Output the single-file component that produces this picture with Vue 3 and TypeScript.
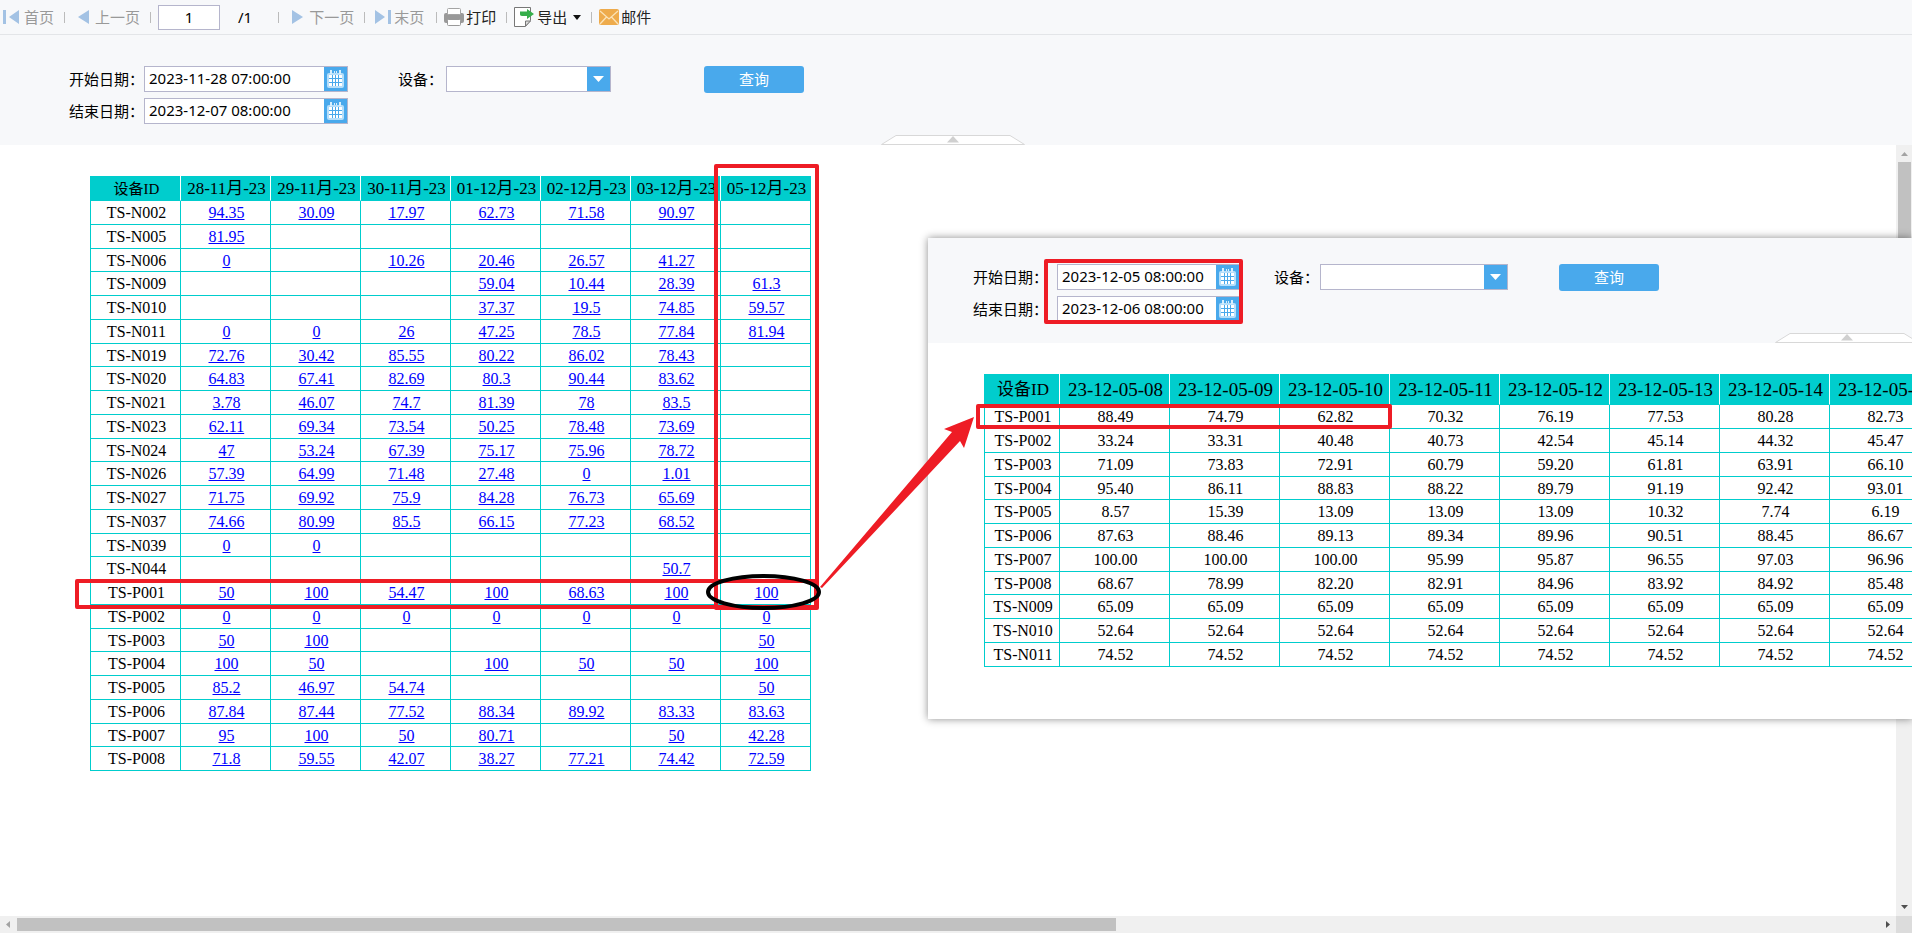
<script setup lang="ts">
import { ref } from 'vue'

interface Row {
  id: string
  values: string[]
}

const parse = (lines: string[]): Row[] =>
  lines.map((line) => {
    const [id, ...values] = line.split(',')
    return { id, values }
  })

const dayColumns = ['28-11月-23', '29-11月-23', '30-11月-23', '01-12月-23', '02-12月-23', '03-12月-23', '05-12月-23']
const dayRows = parse([
  'TS-N002,94.35,30.09,17.97,62.73,71.58,90.97,',
  'TS-N005,81.95,,,,,,',
  'TS-N006,0,,10.26,20.46,26.57,41.27,',
  'TS-N009,,,,59.04,10.44,28.39,61.3',
  'TS-N010,,,,37.37,19.5,74.85,59.57',
  'TS-N011,0,0,26,47.25,78.5,77.84,81.94',
  'TS-N019,72.76,30.42,85.55,80.22,86.02,78.43,',
  'TS-N020,64.83,67.41,82.69,80.3,90.44,83.62,',
  'TS-N021,3.78,46.07,74.7,81.39,78,83.5,',
  'TS-N023,62.11,69.34,73.54,50.25,78.48,73.69,',
  'TS-N024,47,53.24,67.39,75.17,75.96,78.72,',
  'TS-N026,57.39,64.99,71.48,27.48,0,1.01,',
  'TS-N027,71.75,69.92,75.9,84.28,76.73,65.69,',
  'TS-N037,74.66,80.99,85.5,66.15,77.23,68.52,',
  'TS-N039,0,0,,,,,',
  'TS-N044,,,,,,50.7,',
  'TS-P001,50,100,54.47,100,68.63,100,100',
  'TS-P002,0,0,0,0,0,0,0',
  'TS-P003,50,100,,,,,50',
  'TS-P004,100,50,,100,50,50,100',
  'TS-P005,85.2,46.97,54.74,,,,50',
  'TS-P006,87.84,87.44,77.52,88.34,89.92,83.33,83.63',
  'TS-P007,95,100,50,80.71,,50,42.28',
  'TS-P008,71.8,59.55,42.07,38.27,77.21,74.42,72.59',
])

const hourColumns = ['08', '09', '10', '11', '12', '13', '14', '15'].map((h) => `23-12-05-${h}`)
const hourRows = parse([
  'TS-P001,88.49,74.79,62.82,70.32,76.19,77.53,80.28,82.73',
  'TS-P002,33.24,33.31,40.48,40.73,42.54,45.14,44.32,45.47',
  'TS-P003,71.09,73.83,72.91,60.79,59.20,61.81,63.91,66.10',
  'TS-P004,95.40,86.11,88.83,88.22,89.79,91.19,92.42,93.01',
  'TS-P005,8.57,15.39,13.09,13.09,13.09,10.32,7.74,6.19',
  'TS-P006,87.63,88.46,89.13,89.34,89.96,90.51,88.45,86.67',
  'TS-P007,100.00,100.00,100.00,95.99,95.87,96.55,97.03,96.96',
  'TS-P008,68.67,78.99,82.20,82.91,84.96,83.92,84.92,85.48',
  'TS-N009,65.09,65.09,65.09,65.09,65.09,65.09,65.09,65.09',
  'TS-N010,52.64,52.64,52.64,52.64,52.64,52.64,52.64,52.64',
  'TS-N011,74.52,74.52,74.52,74.52,74.52,74.52,74.52,74.52',
])

const page = ref('1')
const filters = ref([
  { key: 'main', start: '2023-11-28 07:00:00', end: '2023-12-07 08:00:00', device: '' },
  { key: 'detail', start: '2023-12-05 08:00:00', end: '2023-12-06 08:00:00', device: '' },
])
const dateFields = [
  { key: 'start', label: '开始日期：' },
  { key: 'end', label: '结束日期：' },
] as const
</script>

<template>
  <div class="report">
    <nav class="toolbar">
      <button class="tool nav" type="button" disabled>
        <svg width="16" height="16" viewBox="0 0 16 16"><path d="M0 1h3v14H0zM16 1v14L6 8z" /></svg>首页
      </button>
      <i class="sep"></i>
      <button class="tool nav" type="button" disabled>
        <svg width="11" height="16" viewBox="0 0 11 16"><path d="M11 1v14L0 8z" /></svg>上一页
      </button>
      <i class="sep tight"></i>
      <input v-model="page" class="page" aria-label="页码" />
      <span class="total">/1</span>
      <i class="sep"></i>
      <button class="tool nav" type="button" disabled>
        <svg width="11" height="16" viewBox="0 0 11 16"><path d="M0 1v14l11-7z" /></svg>下一页
      </button>
      <i class="sep mid"></i>
      <button class="tool nav last" type="button" disabled>
        <svg width="16" height="16" viewBox="0 0 16 16"><path d="M0 1v14l10-7zM13 1h3v14h-3z" /></svg>末页
      </button>
      <i class="sep tight"></i>
      <button class="tool" type="button">
        <svg width="20" height="20" viewBox="0 0 20 20">
          <rect x="0" y="6" width="20" height="10" rx="2" fill="#999" />
          <rect x="3.500" y="1.500" width="13" height="6" rx="1" fill="#fff" stroke="#a4a4a4" />
          <rect x="3.500" y="12.500" width="13" height="6" rx="1" fill="#fff" stroke="#999" />
        </svg>打印
      </button>
      <i class="sep tight"></i>
      <button class="tool" type="button">
        <svg width="21" height="20" viewBox="0 0 21 20">
          <path d="M.5.5h16v13l-5 6H.5z" fill="#fff" stroke="#777" />
          <path d="M11.500 19v-5h5z" fill="#ddd" stroke="#777" />
          <path d="M6 4.500h7V2l7 5-7 5V9H8c-1.500 0-2-1-2-2z" fill="#35ae4a" />
        </svg>导出
        <svg class="caret" width="8" height="5" viewBox="0 0 8 5"><path d="M0 0h8L4 5z" fill="#111" /></svg>
      </button>
      <i class="sep tight"></i>
      <button class="tool" type="button">
        <svg width="20" height="16" viewBox="0 0 20 16">
          <rect width="20" height="16" rx="2" fill="#eeab4c" />
          <path d="M1 2l9 8 9-8M1 15l6.500-7M19 15l-6.500-7" fill="none" stroke="#fbe3b8" stroke-width="1.300" />
        </svg>邮件
      </button>
    </nav>

    <form
      v-for="f in filters.slice(0, 1)" :key="f.key" class="filter" @submit.prevent>
      <div class="dates">
        <div v-for="d in dateFields" :key="d.key" class="row">
          <label :for="`${f.key}-${d.key}`">{{ d.label }}</label>
          <div class="field">
            <input :id="`${f.key}-${d.key}`" v-model="f[d.key]" />
            <button class="pick" type="button" aria-label="选择日期">
              <svg width="17" height="18" viewBox="0 0 17 18">
                <rect x="0" y="3" width="17" height="15" rx="2" fill="#b5defa" />
                <path d="M3 0h2v4H3zM7 1h1v2H7zM9 1h1v2H9zM12 0h2v4h-2z" fill="#d9effc" />
                <path d="M2 5h13v11H2z" fill="#49a9ec" />
                <path d="M2 5h3v3H2zM6 5h2v3H6zM9 5h2v3H9zM12 5h3v3h-3zM2 9h3v3H2zM6 9h2v3H6zM9 9h2v3H9zM12 9h3v3h-3zM2 13h3v3H2zM6 13h2v3H6zM9 13h2v3H9zM12 13h3v3h-3z" fill="#fff" />
              </svg>
            </button>
          </div>
        </div>
      </div>
      <div class="row device">
        <label :for="`${f.key}-device`">设备：</label>
        <div class="field">
          <select :id="`${f.key}-device`" v-model="f.device"><option value=""></option></select>
          <span class="pick drop"><svg width="11" height="6" viewBox="0 0 11 6"><path d="M0 0h11L5.500 6z" fill="#fff" /></svg></span>
        </div>
      </div>
      <button class="query" type="submit">查询</button>
      <button class="fold" type="button" aria-label="收起">
        <svg width="144" height="10" viewBox="0 0 144 10">
          <path d="M.5 9.500L15 .5h114l14.500 9z" fill="#fff" stroke="#d8d8d8" />
          <path d="M66 7.500h12L72 1z" fill="#d0d0d0" />
        </svg>
      </button>
    </form>

    <main class="viewport">
      <div class="sheet">
        <table class="grid days">
          <thead>
            <tr>
              <th class="id">设备ID</th>
              <th v-for="c in dayColumns" :key="c">{{ c }}</th>
            </tr>
          </thead>
          <tbody>
            <tr v-for="r in dayRows" :key="r.id">
              <td>{{ r.id }}</td>
              <td v-for="(v, i) in r.values" :key="i"><a v-if="v" href="#">{{ v }}</a></td>
            </tr>
          </tbody>
        </table>
      </div>
      <div class="vbar">
        <svg width="7" height="4" viewBox="0 0 7 4"><path d="M0 4h7L3.500 0z" fill="#a3a3a3" /></svg>
        <i class="thumb"></i>
        <svg width="7" height="4" viewBox="0 0 7 4"><path d="M0 0h7L3.500 4z" fill="#505050" /></svg>
      </div>
    </main>
    <div class="hbar">
      <div class="track">
        <svg width="4" height="7" viewBox="0 0 4 7"><path d="M4 0v7L0 3.500z" fill="#a3a3a3" /></svg>
        <div class="run"><i class="thumb"></i></div>
        <svg width="4" height="7" viewBox="0 0 4 7"><path d="M0 0v7l4-3.500z" fill="#505050" /></svg>
      </div>
      <i class="corner"></i>
    </div>

    <section class="detail">
      <form v-for="f in filters.slice(1)" :key="f.key" class="filter" @submit.prevent>
        <div class="dates">
          <div v-for="d in dateFields" :key="d.key" class="row">
            <label :for="`${f.key}-${d.key}`">{{ d.label }}</label>
            <div class="field">
              <input :id="`${f.key}-${d.key}`" v-model="f[d.key]" />
              <button class="pick" type="button" aria-label="选择日期">
                <svg width="17" height="18" viewBox="0 0 17 18">
                  <rect x="0" y="3" width="17" height="15" rx="2" fill="#b5defa" />
                  <path d="M3 0h2v4H3zM7 1h1v2H7zM9 1h1v2H9zM12 0h2v4h-2z" fill="#d9effc" />
                  <path d="M2 5h13v11H2z" fill="#49a9ec" />
                  <path d="M2 5h3v3H2zM6 5h2v3H6zM9 5h2v3H9zM12 5h3v3h-3zM2 9h3v3H2zM6 9h2v3H6zM9 9h2v3H9zM12 9h3v3h-3zM2 13h3v3H2zM6 13h2v3H6zM9 13h2v3H9zM12 13h3v3h-3z" fill="#fff" />
                </svg>
              </button>
            </div>
          </div>
        </div>
        <div class="row device">
          <label :for="`${f.key}-device`">设备：</label>
          <div class="field">
            <select :id="`${f.key}-device`" v-model="f.device"><option value=""></option></select>
            <span class="pick drop"><svg width="11" height="6" viewBox="0 0 11 6"><path d="M0 0h11L5.500 6z" fill="#fff" /></svg></span>
          </div>
        </div>
        <button class="query" type="submit">查询</button>
        <button class="fold" type="button" aria-label="收起">
          <svg width="144" height="10" viewBox="0 0 144 10">
            <path d="M.5 9.500L15 .5h114l14.500 9z" fill="#fff" stroke="#d8d8d8" />
            <path d="M66 7.500h12L72 1z" fill="#d0d0d0" />
          </svg>
        </button>
      </form>
      <div class="inner">
        <table class="grid hours">
          <thead>
            <tr>
              <th class="id">设备ID</th>
              <th v-for="c in hourColumns" :key="c">{{ c }}</th>
            </tr>
          </thead>
          <tbody>
            <tr v-for="r in hourRows" :key="r.id">
              <td>{{ r.id }}</td>
              <td v-for="(v, i) in r.values" :key="i">{{ v }}</td>
            </tr>
          </tbody>
        </table>
      </div>
    </section>

    <svg class="marks" width="1400" height="620" viewBox="0 0 1400 620">
      <g fill="none" stroke="#ee1c25" stroke-width="4" stroke-linejoin="round">
        <rect x="716" y="166" width="101" height="442" />
        <rect x="77" y="581" width="739" height="26" />
        <rect x="1046" y="261" width="195" height="61" />
        <rect x="978" y="406" width="412" height="21" />
      </g>
      <path d="M820 587L952 432l-8-3 30-12-10 31-4-7L822 588z" fill="#ee1c25" />
      <ellipse cx="763.500" cy="592" rx="55.500" ry="16" fill="none" stroke="#000" stroke-width="4" />
    </svg>
  </div>
</template>

<style>
body {
  margin: 0;
}
</style>

<style scoped>
.report {
  --ui: 'Noto Sans', 'Noto Sans CJK SC', sans-serif;
  --song: 'Liberation Serif', 'Noto Sans CJK SC', serif;
  position: relative;
  display: flex;
  flex-direction: column;
  height: 100vh;
  overflow: hidden;
  background: #fff;
  font: 15px/20px var(--ui);
  color: #000;
}
.report * {
  box-sizing: border-box;
}
button,
input,
select {
  margin: 0;
  padding: 0;
  border: 0;
  border-radius: 0;
  font: inherit;
  color: inherit;
  background: none;
}
svg {
  flex: none;
  display: block;
}
.toolbar {
  flex: none;
  display: flex;
  align-items: center;
  height: 35px;
  padding-left: 3px;
  background: #f7f8fa;
  border-bottom: 1px solid #e3e5e8;
}
.tool {
  display: flex;
  align-items: center;
  gap: 2px;
  color: #222;
  white-space: nowrap;
}
.tool.nav {
  gap: 6px;
  color: #999;
}
.tool.nav:first-child {
  gap: 5px;
}
.tool.last {
  gap: 3px;
  margin-right: 2px;
}
.tool.nav svg {
  fill: #a3c2e4;
}
.tool .caret {
  margin-left: 4px;
}
.sep {
  width: 1px;
  height: 11px;
  margin: 0 13px 0 10px;
  background: #bbb;
}
.sep.mid {
  margin: 0 10px;
}
.sep.tight {
  margin: 0 7px 0 10px;
}
.page {
  width: 62px;
  height: 25px;
  border: 1px solid #b5b5cc;
  background: #fff;
  text-align: center;
}
.total {
  margin: 0 16px 0 18px;
}
.filter {
  position: relative;
  flex: none;
  display: flex;
  align-items: flex-start;
  height: 110px;
  padding: 31px 0 0 69px;
  background: #f7f8fa;
}
.dates {
  display: flex;
  flex-direction: column;
  gap: 6px;
}
.row {
  display: flex;
  align-items: center;
}
.row label {
  width: 75px;
  white-space: nowrap;
}
.field {
  position: relative;
  display: flex;
  width: 204px;
  height: 26px;
  border: 1px solid #b5b5cc;
  background: #fff;
}
.field input,
.field select {
  flex: 1;
  min-width: 0;
  padding: 0 0 2px 4px;
  appearance: none;
  outline: none;
}
.pick {
  display: flex;
  align-items: center;
  justify-content: center;
  width: 23px;
  background: #49a9ec;
}
.drop {
  pointer-events: none;
}
.device {
  margin-left: 50px;
}
.device label {
  width: 48px;
}
.device .field {
  width: 165px;
}
.query {
  width: 100px;
  height: 27px;
  padding-bottom: 2px;
  margin-left: 93px;
  border-radius: 3px;
  background: #49a9ec;
  color: #fff;
}
.fold {
  position: absolute;
  left: 881px;
  bottom: 0;
}
.viewport {
  flex: 1;
  display: flex;
  min-height: 0;
}
.sheet {
  flex: 1;
  min-width: 0;
  padding: 31px 0 0 90px;
  overflow: hidden;
}
.grid {
  table-layout: fixed;
  border-collapse: separate;
  border-spacing: 0;
  font: 16px/20px var(--song);
  text-align: center;
}
.grid th,
.grid td {
  height: 24px;
  padding: 1px 0 0 2px;
  border: solid #00cdcd;
  border-width: 0 1px 1px 0;
  line-height: 20px;
  white-space: nowrap;
}
.grid th {
  height: 25px;
  background: #00cdcd;
  border-right-color: #fff;
  font-size: 17px;
  font-weight: normal;
}
.grid th:last-child {
  border-right-color: #00cdcd;
}
.grid tr > :first-child {
  border-left-width: 1px;
}
.grid a {
  color: #00f;
  text-decoration: underline;
}
.days {
  width: 721px;
}
.days .id {
  width: 91px;
  font-size: 15px;
}
.days tbody tr:nth-child(4n + 3) td,
.hours tbody tr:nth-child(4n) td {
  height: 23px;
}
.vbar {
  flex: none;
  display: flex;
  flex-direction: column;
  align-items: center;
  width: 16px;
  padding: 7px 0 7px;
  background: #f0f0f0;
}
.thumb {
  background: #c1c1c1;
}
.vbar .thumb {
  width: 13px;
  height: 380px;
  margin: 6px 0 auto;
}
.hbar {
  flex: none;
  display: flex;
  height: 17px;
}
.track {
  flex: 1;
  display: flex;
  align-items: center;
  gap: 7px;
  padding: 0 6px;
  background: #f0f0f0;
}
.run {
  flex: 1;
  display: flex;
}
.hbar .thumb {
  width: 59%;
  height: 13px;
}
.corner {
  width: 16px;
  background: #dcdcdc;
}
.detail {
  position: absolute;
  top: 238px;
  left: 928px;
  right: 0;
  padding-bottom: 52px;
  background: #fff;
  box-shadow: 0 0 8px rgba(0, 0, 0, 0.45);
}
.detail .filter {
  height: 105px;
  padding: 26px 0 0 45px;
  overflow: hidden;
}
.detail .row label {
  width: 84px;
}
.detail .field {
  width: 183px;
}
.detail .device {
  margin-left: 34px;
}
.detail .device label {
  width: 46px;
}
.detail .device .field {
  width: 188px;
}
.detail .query {
  margin-left: 51px;
}
.detail .fold {
  left: 847px;
}
.inner {
  padding: 31px 0 0 56px;
  overflow: hidden;
}
.hours {
  width: 956px;
}
.hours th {
  height: 31px;
  font-size: 19px;
}
.hours .id {
  width: 76px;
  font-size: 17px;
}
.marks {
  position: absolute;
  top: 0;
  left: 0;
  pointer-events: none;
}
</style>
